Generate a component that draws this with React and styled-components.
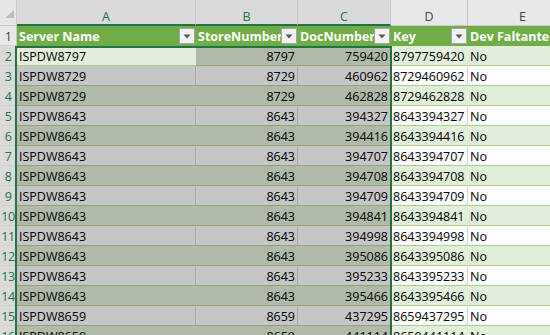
import React from 'react';
import styled, { createGlobalStyle, css } from 'styled-components';

const GlobalStyle = createGlobalStyle`
  html, body { margin: 0; padding: 0; background: #ffffff; overflow: hidden; }
  body { font-family: "Open Sans", Lato, sans-serif; }
`;

const COLS = [
  { letter: 'A', width: 179, title: 'Server Name', align: 'left', sel: true },
  { letter: 'B', width: 102, title: 'StoreNumber', align: 'right', sel: true },
  { letter: 'C', width: 93, title: 'DocNumber', align: 'right', sel: true },
  { letter: 'D', width: 77, title: 'Key', align: 'left', sel: false },
  { letter: 'E', width: 110, title: 'Dev Faltante', align: 'left', sel: false },
];

const DATA = [
  ['ISPDW8797', '8797', '759420'],
  ['ISPDW8729', '8729', '460962'],
  ['ISPDW8729', '8729', '462828'],
  ['ISPDW8643', '8643', '394327'],
  ['ISPDW8643', '8643', '394416'],
  ['ISPDW8643', '8643', '394707'],
  ['ISPDW8643', '8643', '394708'],
  ['ISPDW8643', '8643', '394709'],
  ['ISPDW8643', '8643', '394841'],
  ['ISPDW8643', '8643', '394998'],
  ['ISPDW8643', '8643', '395086'],
  ['ISPDW8643', '8643', '395233'],
  ['ISPDW8643', '8643', '395466'],
  ['ISPDW8659', '8659', '437295'],
  ['ISPDW8659', '8659', '441114'],
];

const PALETTE = {
  green: { bg: '#e2efda', line: '#a9d08e', vline: '#e2efda' },
  greenSel: { bg: '#afbba8', line: '#8aa775', vline: '#afbba8' },
  white: { bg: '#ffffff', line: '#a9d08e', vline: '#d4d4d4' },
  whiteSel: { bg: '#c6c6c6', line: '#8aa775', vline: '#a9a9a9' },
};

const Sheet = styled.div`
  position: relative;
  display: grid;
  grid-template-columns: 17px ${COLS.map((c) => `${c.width}px`).join(' ')};
  grid-template-rows: 26px 20px;
  grid-auto-rows: 20px;
  width: max-content;
  font-size: 12.5px;
  color: #000;
`;

const Corner = styled.div`
  box-sizing: border-box;
  background: #e6e6e6;
  border-right: 1px solid #c8c8c8;
  border-bottom: 1px solid #c8c8c8;
  display: flex;
  justify-content: flex-end;
  align-items: flex-start;
  padding: 10px 2px 0 0;
`;

const ColHead = styled.div`
  box-sizing: border-box;
  background: ${(p) => (p.$sel ? '#dadada' : '#e8e8e8')};
  color: ${(p) => (p.$sel ? '#217346' : '#444444')};
  border-right: 1px solid #c8c8c8;
  border-bottom: ${(p) => (p.$sel ? '2px solid #217346' : '1px solid #c8c8c8')};
  text-align: center;
  line-height: 16px;
  padding-top: 9px;
`;

const RowHead = styled.div`
  box-sizing: border-box;
  background: ${(p) => (p.$sel ? '#dadada' : '#e8e8e8')};
  color: ${(p) => (p.$sel ? '#217346' : '#444444')};
  border-right: 1px solid ${(p) => (p.$sel ? '#217346' : '#c8c8c8')};
  border-bottom: 1px solid #d0d0d0;
  text-align: center;
  line-height: 16px;
  padding-top: 3px;
  overflow: hidden;
  white-space: nowrap;
  letter-spacing: -0.5px;
`;

const HeadCell = styled.div`
  box-sizing: border-box;
  background: #70ad47;
  color: #ffffff;
  font-weight: 700;
  display: flex;
  align-items: flex-start;
  padding: 0 1px 0 2px;
  overflow: hidden;
`;

const HeadText = styled.span`
  flex: 1;
  min-width: 0;
  overflow: hidden;
  white-space: nowrap;
  line-height: 16px;
  padding-top: 3px;
`;

const FilterButton = styled.span`
  flex: none;
  box-sizing: border-box;
  width: 16px;
  height: 16px;
  margin-top: 2px;
  background: #f3f3f3;
  border: 1px solid #a6a6a6;
  display: flex;
  align-items: center;
  justify-content: center;
`;

const Cell = styled.div`
  box-sizing: border-box;
  ${(p) => {
    const c = PALETTE[p.$tone];
    return css`
      background: ${c.bg};
      border-bottom: 1px solid ${c.line};
      border-right: 1px solid ${c.vline};
    `;
  }}
  text-align: ${(p) => p.$align};
  padding: 3px 2px 0 2px;
  line-height: 16px;
  white-space: nowrap;
  overflow: hidden;
`;

const Selection = styled.div`
  position: absolute;
  left: 15px;
  top: 46px;
  width: 377px;
  height: 400px;
  box-sizing: border-box;
  border: 2px solid #217346;
  pointer-events: none;
`;

const Triangle = () => (
  <svg width="9" height="8" viewBox="0 0 9 8">
    <polygon points="9,0 9,8 0,8" fill="#bdbdbd" />
  </svg>
);

const FilterArrow = () => (
  <svg width="8" height="5" viewBox="0 0 8 5">
    <polygon points="0.5,0.5 7.5,0.5 4,4.5" fill="#595959" />
  </svg>
);

export default function App() {
  return (
    <>
      <GlobalStyle />
      <Sheet>
        <Corner>
          <Triangle />
        </Corner>
        {COLS.map((c) => (
          <ColHead key={c.letter} $sel={c.sel}>
            {c.letter}
          </ColHead>
        ))}

        <RowHead $sel={false}>1</RowHead>
        {COLS.map((c) => (
          <HeadCell key={c.title}>
            <HeadText>{c.title}</HeadText>
            <FilterButton>
              <FilterArrow />
            </FilterButton>
          </HeadCell>
        ))}

        {DATA.map((row, i) => {
          const rowNum = i + 2;
          const green = rowNum % 2 === 0;
          const values = [row[0], row[1], row[2], row[1] + row[2], 'No'];
          return (
            <React.Fragment key={rowNum}>
              <RowHead $sel>{rowNum}</RowHead>
              {COLS.map((c, j) => {
                const active = rowNum === 2 && j === 0;
                const selected = c.sel && !active;
                const tone = (green ? 'green' : 'white') + (selected ? 'Sel' : '');
                return (
                  <Cell key={c.letter} $tone={tone} $align={c.align}>
                    {values[j]}
                  </Cell>
                );
              })}
            </React.Fragment>
          );
        })}
        <Selection />
      </Sheet>
    </>
  );
}
